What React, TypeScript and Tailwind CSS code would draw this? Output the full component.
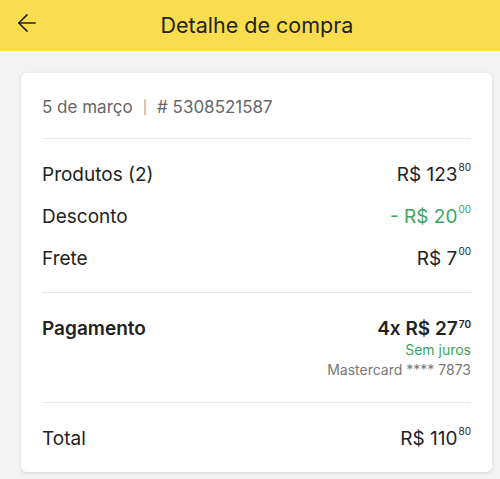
import { ArrowLeft } from "lucide-react";

function Price({ main, cents, className = "" }: { main: string; cents: string; className?: string }) {
  return (
    <span className={`inline-flex items-start ${className}`}>
      <span>{main}</span>
      <span className="ml-[1px] mt-[1px] text-[10px] leading-none">{cents}</span>
    </span>
  );
}

export default function App() {
  return (
    <div className="min-h-[479px] bg-[#f3f3f3] font-['Inter',sans-serif] text-[#222]">
      <header className="relative flex h-[51px] items-center justify-center bg-[#f9dd4e]">
        <ArrowLeft className="absolute left-[13px] top-[9px] h-[28px] w-[28px] text-[#222]" strokeWidth={1.4} />
        <h1 className="pl-[14px] text-[21.5px] leading-none text-[#222]">Detalhe de compra</h1>
      </header>

      <div className="px-[21px] pt-[22px] pb-[9px] pr-[8px]">
        <div className="rounded-[6px] bg-white px-[21px] shadow-[0_1px_4px_rgba(0,0,0,0.12)]">
          <div className="flex h-[66px] items-center border-b border-[#e6e6e6] pt-[4px] text-[17px] text-[#666]">
            <span>5 de março</span>
            <span className="mx-[10px] text-[13px] text-[#999]">|</span>
            <span># 5308521587</span>
          </div>

          <div className="flex flex-col gap-[20px] border-b border-[#e6e6e6] pt-[25px] pb-[22px] text-[19px]">
            <div className="flex h-[22px] items-center justify-between">
              <span>Produtos (2)</span>
              <Price main="R$ 123" cents="80" />
            </div>
            <div className="flex h-[22px] items-center justify-between">
              <span>Desconto</span>
              <Price main="- R$ 20" cents="00" className="text-[#3aa65a]" />
            </div>
            <div className="flex h-[22px] items-center justify-between">
              <span>Frete</span>
              <Price main="R$ 7" cents="00" />
            </div>
          </div>

          <div className="flex justify-between border-b border-[#e6e6e6] pt-[25px] pb-[23px]">
            <span className="text-[19px] font-semibold leading-[22px]">Pagamento</span>
            <div className="flex flex-col items-end">
              <Price main="4x R$ 27" cents="70" className="text-[19px] font-semibold leading-[22px]" />
              <span className="text-[14px] leading-[20px] text-[#3aa65a]">Sem juros</span>
              <span className="text-[14px] leading-[19px] text-[#777]">Mastercard **** 7873</span>
            </div>
          </div>

          <div className="flex h-[69px] items-center justify-between pt-[4px] text-[19px]">
            <span>Total</span>
            <Price main="R$ 110" cents="80" />
          </div>
        </div>
      </div>
    </div>
  );
}
